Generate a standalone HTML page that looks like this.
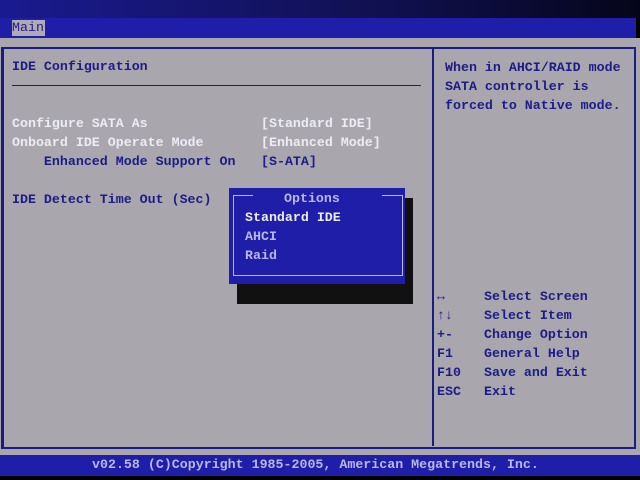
<!DOCTYPE html>
<html><head><style>
body{margin:0;width:640px;height:480px;overflow:hidden;background:#000;font-family:"Liberation Mono",monospace;font-size:13.3px;position:relative}
.a{position:absolute;white-space:pre;line-height:16px;font-weight:bold}
.w{color:#ececf4}.d{color:#1c1c88}.l{color:#b8b8e8}
</style></head><body>
<div class="a" style="left:0;top:0;width:640px;height:18px;background:linear-gradient(90deg,#1a1a90,#101050 60%,#05051a)"></div>
<div class="a" style="left:0;top:18px;width:636px;height:20px;background:#1e1ea8"></div>
<div class="a" style="left:12px;top:20px;width:33px;height:16px;background:#b0aab4;color:#1c1c88;font-weight:normal">Main</div>
<div class="a" style="left:0;top:38px;width:640px;height:417px;background:#aaa6ae"></div>
<div class="a" style="left:1px;top:47px;width:630px;height:398px;border:2px solid #1c1c88;border-left-width:3px"></div>
<div class="a" style="left:432px;top:48px;width:2px;height:398px;background:#1c1c88"></div>
<div class="a" style="left:12px;top:85px;width:409px;height:1px;background:#1c1c88"></div>
<div class="a d" style="left:12px;top:59px">IDE Configuration</div>
<div class="a w" style="left:12px;top:116px">Configure SATA As</div>
<div class="a w" style="left:12px;top:135px">Onboard IDE Operate Mode</div>
<div class="a d" style="left:12px;top:154px">    Enhanced Mode Support On</div>
<div class="a d" style="left:12px;top:192px">IDE Detect Time Out (Sec)</div>
<div class="a w" style="left:261px;top:116px">[Standard IDE]</div>
<div class="a w" style="left:261px;top:135px">[Enhanced Mode]</div>
<div class="a d" style="left:261px;top:154px">[S-ATA]</div>
<div class="a d" style="left:445px;top:58px;line-height:19px">When in AHCI/RAID mode
SATA controller is
forced to Native mode.</div>
<div class="a d" style="left:437px;top:287px;line-height:19px">↔
↑↓
+-
F1
F10
ESC</div>
<div class="a d" style="left:484px;top:287px;line-height:19px">Select Screen
Select Item
Change Option
General Help
Save and Exit
Exit</div>
<div class="a" style="left:237px;top:198px;width:176px;height:106px;background:#111"></div>
<div class="a" style="left:229px;top:188px;width:176px;height:96px;background:#1e1ea8"></div>
<div class="a" style="left:233px;top:195px;width:168px;height:80px;border:1px solid #b8b8e8;border-top:none"></div>
<div class="a" style="left:233px;top:195px;width:20px;height:1px;background:#b8b8e8"></div>
<div class="a" style="left:382px;top:195px;width:20px;height:1px;background:#b8b8e8"></div>
<div class="a l" style="left:284px;top:191px">Options</div>
<div class="a w" style="left:245px;top:210px">Standard IDE</div>
<div class="a l" style="left:245px;top:229px">AHCI</div>
<div class="a l" style="left:245px;top:248px">Raid</div>
<div class="a" style="left:0;top:455px;width:640px;height:21px;background:#1e1ea8"></div>
<div class="a l" style="left:92px;top:457px">v02.58 (C)Copyright 1985-2005, American Megatrends, Inc.</div>
</body></html>
